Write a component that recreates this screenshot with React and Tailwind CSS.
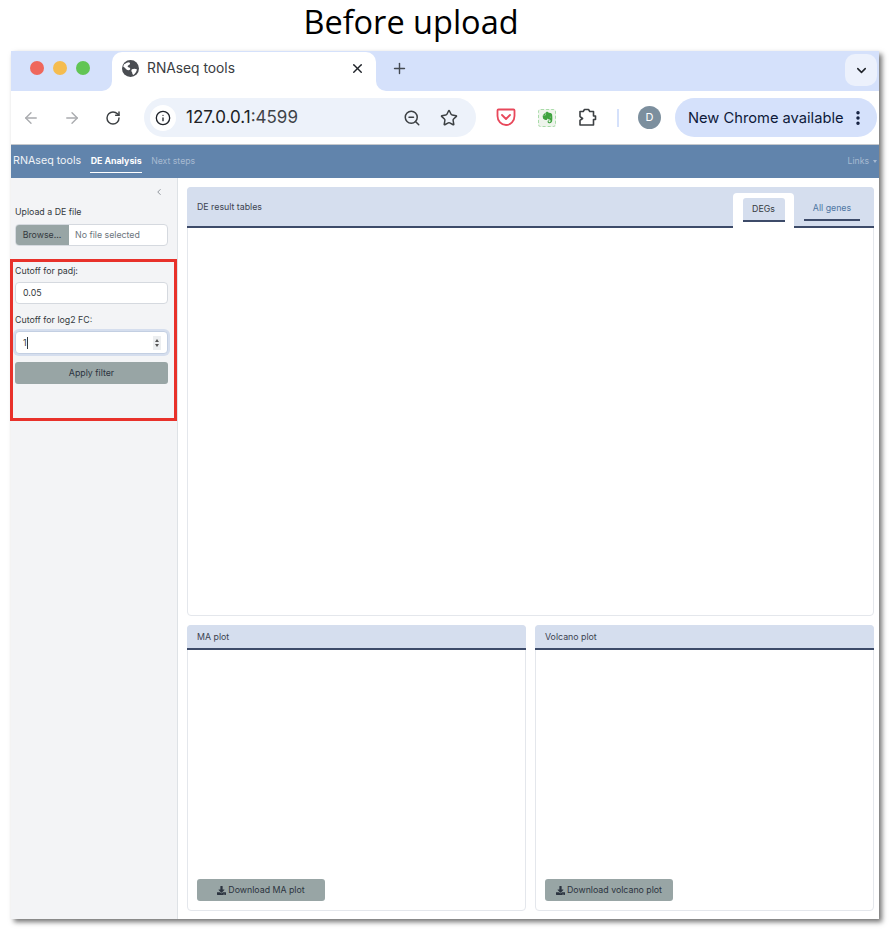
import React from "react";
import { ArrowLeft, ArrowRight, RotateCw, Info, ZoomOut, Star, X, Plus, ChevronDown, ChevronLeft, EllipsisVertical } from "lucide-react";
import { FaDownload, FaEvernote } from "react-icons/fa";

function Globe() {
  return (
    <svg width="17" height="17" viewBox="0 0 24 24">
      <circle cx="12" cy="12" r="12" fill="#4a4d52" />
      <path d="M3 6c2-1 4-3 7-3 1 1 2 2 1 3-1 2-3 1-3 3 0 1 2 1 3 2s1 3-1 3c-2 1-3 0-5-2-1-1-2-2-3-2 0-1 0-3 1-4zM14 13c2-1 5-1 7 0 0 3-2 6-5 8-2-1-1-3-2-4s-1-3 0-4z" fill="#fff" />
    </svg>
  );
}

function Pocket() {
  return (
    <svg width="20" height="19" viewBox="0 0 20 19" fill="none">
      <path d="M1.5 2.5C1.5 1.9 2 1.5 2.5 1.5h15c.6 0 1 .4 1 1V8c0 5-3.800 9-8.500 9S1.500 13 1.500 8V2.500z" stroke="#e8485b" strokeWidth="1.800" />
      <path d="M6 7l4 4 4-4" stroke="#e8485b" strokeWidth="1.800" strokeLinecap="round" strokeLinejoin="round" />
    </svg>
  );
}

function Puzzle() {
  return (
    <svg width="19" height="19" viewBox="0 0 19 19" fill="none">
      <path d="M2 3.500h3.200l1.300-2h4l1.300 2H15.500V8H17.500v3.500H15.500V17H2v-4.600l2.600-1.900L2 8.600V3.500z" stroke="#3c4043" strokeWidth="1.600" strokeLinejoin="round" />
    </svg>
  );
}

function Panel({ title, button }) {
  return (
    <div className="flex-1 h-[286px] flex flex-col bg-white border border-[#e4e7ec] rounded-[4px]">
      <div className="h-[25px] -mx-px -mt-px bg-[#d5deee] border-b-2 border-[#3d4b69] rounded-t-[4px] pl-[10px] flex items-center text-[8.800px] text-[#3c4350]">
        {title}
      </div>
      <div className="flex-1" />
      <div className="pl-[9px] pb-[9px]">
        <div className="w-[128px] h-[22px] bg-[#98a5a5] rounded-[3px] flex items-center justify-center gap-[2px] text-[8.800px] text-[#2c3440]">
          <FaDownload className="w-[9px] h-[9px]" />
          {button}
        </div>
      </div>
    </div>
  );
}

export default function App() {
  return (
    <div className="w-[892px] h-[934px] bg-white overflow-hidden text-[#343a40]" style={{ fontFamily: "Inter, 'Liberation Sans', sans-serif" }}>
      <div className="h-[51px] w-[822px] flex items-start justify-center text-[32.500px] leading-[44px] text-black" style={{ fontFamily: "'Open Sans', sans-serif" }}>
        Before upload
      </div>

      <div className="ml-[11px] w-[868px] h-[868px] flex flex-col bg-white shadow-[3px_3px_5px_rgba(0,0,0,0.55)]">
        {/* tab strip */}
        <div className="h-[40px] shrink-0 bg-[#d5e1fb] flex items-end">
          <div className="w-[101px] h-full pl-[19px] flex items-center gap-[9px] pb-[6px]">
            <span className="w-[14px] h-[14px] rounded-full bg-[#ef675c]" />
            <span className="w-[14px] h-[14px] rounded-full bg-[#f5bc4f]" />
            <span className="w-[14px] h-[14px] rounded-full bg-[#62c554]" />
          </div>
          <div className="relative w-[264px] h-[39px] bg-white rounded-t-[10px] flex items-center pl-[10px] pr-[11px] pb-[7px]">
            <span className="absolute -left-[10px] bottom-0 w-[10px] h-[10px] bg-white"><span className="block w-full h-full bg-[#d5e1fb] rounded-br-[10px]" /></span>
            <span className="absolute -right-[10px] bottom-0 w-[10px] h-[10px] bg-white"><span className="block w-full h-full bg-[#d5e1fb] rounded-bl-[10px]" /></span>
            <Globe />
            <span className="ml-[8px] text-[13.800px] text-[#3a3d42]">RNAseq tools</span>
            <X className="ml-auto w-[15px] h-[15px] text-[#1f2329]" strokeWidth={2.2} />
          </div>
          <div className="flex-1 h-full flex items-center pb-[6px] pl-[14px]">
            <Plus className="w-[17px] h-[17px] ml-px text-[#444a52]" strokeWidth={2} />
            <div className="ml-auto mr-[2px] mb-[-4px] w-[32px] h-[32px] rounded-[10px] bg-[#ecf1fc] flex items-center justify-center">
              <ChevronDown className="w-[15px] h-[15px] text-[#1f2329]" strokeWidth={2.4} />
            </div>
          </div>
        </div>

        {/* toolbar */}
        <div className="h-[54px] shrink-0 bg-white border-b border-[#c5c8cc] flex items-center">
          <div className="w-[133px] flex items-center pl-[11px]">
            <ArrowLeft className="w-[18px] h-[18px] text-[#a9abae]" strokeWidth={1.8} />
            <ArrowRight className="ml-[23px] w-[18px] h-[18px] text-[#a9abae]" strokeWidth={1.8} />
            <RotateCw className="ml-[24px] w-[16px] h-[16px] text-[#3c4043]" strokeWidth={2.2} />
          </div>
          <div className="w-[332px] h-[39px] rounded-full bg-[#edf2fa] flex items-center pl-[6px] pr-[18px]">
            <span className="w-[26px] h-[26px] rounded-full bg-white flex items-center justify-center">
              <Info className="w-[16px] h-[16px] text-[#1f2329]" strokeWidth={2} />
            </span>
            <span className="ml-[10px] text-[17px] text-[#202124]">127.0.0.1<span className="text-[#3f4348]">:4599</span></span>
            <ZoomOut className="ml-auto w-[18px] h-[18px] text-[#3c4043] -translate-x-px" strokeWidth={2} />
            <Star className="ml-[18px] w-[18px] h-[18px] text-[#3c4043]" strokeWidth={2} />
          </div>
          <div className="ml-[20px]"><Pocket /></div>
          <div className="ml-[22px] w-[18px] h-[18px] rounded-[3px] bg-[#eef4ec] border border-dashed border-[#a9dca9] flex items-center justify-center">
            <FaEvernote className="w-[13px] h-[13px] text-[#3fa33f]" />
          </div>
          <div className="ml-[22px]"><Puzzle /></div>
          <div className="ml-[20px] w-[2px] h-[18px] bg-[#d5e1fb]" />
          <div className="ml-[19px] w-[23px] h-[23px] rounded-full bg-[#7c8f9e] flex items-center justify-center text-[11px] text-white">D</div>
          <div className="ml-[14px] w-[202px] h-[39px] rounded-full bg-[#d5e1fb] flex items-center pl-[13px] pt-px text-[14.700px] whitespace-nowrap text-[#0e1a3a]">
            New Chrome available
            <EllipsisVertical className="ml-[5px] w-[18px] h-[18px] text-[#0e1a3a]" strokeWidth={2.6} />
          </div>
        </div>

        {/* navbar */}
        <div className="h-[33px] shrink-0 bg-[#6184ac] flex items-stretch pl-[2px] pr-[2px]">
          <div className="flex items-center text-[10.700px] text-[#f0f3f7]">RNAseq tools</div>
          <div className="ml-[9px] w-[52px] flex items-center justify-center text-[8.800px] font-bold text-white border-b border-white mb-[5px] mt-[5px] whitespace-nowrap">DE Analysis</div>
          <div className="ml-[9px] flex items-center text-[8.700px] text-[#a7bad1]">Next steps</div>
          <div className="ml-auto flex items-center text-[8.700px] text-[#a7bad1]">
            Links
            <span className="ml-[4px] w-0 h-0 border-x-[2.500px] border-x-transparent border-t-[3px] border-t-[#a7bad1]" />
          </div>
        </div>

        {/* body */}
        <div className="flex-1 flex min-h-0">
          <aside className="w-[167px] shrink-0 bg-[#f3f4f6] border-r border-[#dee2e6] flex flex-col text-[8.800px] text-[#343a40]">
            <div className="h-[28px] flex items-center justify-end pr-[13px]">
              <ChevronLeft className="w-[10px] h-[10px] text-[#5f6670]" strokeWidth={1.6} />
            </div>
            <div className="pl-[4px] h-[53px]">
              <div className="h-[12px] flex items-center">Upload a DE file</div>
              <div className="mt-[6px] w-[153px] h-[22px] flex bg-white border border-[#d5d9df] rounded-[4px] overflow-hidden">
                <div className="w-[54px] -my-px -ml-px bg-[#98a5a5] flex items-center justify-center text-[#343a40]">Browse...</div>
                <div className="flex-1 pl-[6px] flex items-center text-[#6c757d]">No file selected</div>
              </div>
            </div>
            <div className="-ml-px w-[167px] h-[162px] border-[3px] border-[#e8312a] pl-[2px]">
              <div className="w-[153px]">
                <div className="h-[15px] flex items-end">Cutoff for padj:</div>
                <div className="mt-[5px] h-[22px] bg-white border border-[#d5d9df] rounded-[4px] flex items-center pl-[7px] text-[#343a40]">0.05</div>
                <div className="mt-[10px] h-[12px] flex items-center">Cutoff for log2 FC:</div>
                <div className="mt-[5px] h-[23px] bg-white border border-[#c3cfe2] rounded-[4px] ring-2 ring-[#d5deee] flex items-center pl-[7px] pr-[6px] text-[#343a40]">
                  1<span className="w-px h-[12px] bg-[#343a40]" />
                  <span className="ml-auto w-[8px] h-[14px] bg-[#eceef0] flex flex-col items-center justify-center gap-[2px]">
                    <span className="w-0 h-0 border-x-[2px] border-x-transparent border-b-[3px] border-b-[#555]" />
                    <span className="w-0 h-0 border-x-[2px] border-x-transparent border-t-[3px] border-t-[#555]" />
                  </span>
                </div>
                <div className="mt-[8px] h-[22px] bg-[#98a5a5] rounded-[3px] flex items-center justify-center text-[#2c3440]">Apply filter</div>
              </div>
            </div>
          </aside>

          <main className="flex-1 bg-white pt-[9px] pl-[9px] pr-[5px] flex flex-col gap-[9px]">
            <div className="h-[429px] flex flex-col bg-white border border-[#e4e7ec] rounded-[4px]">
              <div className="h-[41px] -mx-px -mt-px bg-[#d5deee] border-b-2 border-[#3d4b69] rounded-t-[4px] pl-[10px] pr-[14px] flex text-[8.800px]">
                <div className="flex items-center pt-px text-[#3c4350]">DE result tables</div>
                <div className="ml-auto mt-[6px] -mb-[2px] w-[61px] bg-white rounded-t-[4px] pt-[5px] flex justify-center">
                  <div className="w-[42px] h-[24px] bg-[#d5deee] rounded-t-[3px] border-b-2 border-[#3d4b69] flex items-center justify-center text-[#343a40]">DEGs</div>
                </div>
                <div className="ml-[10px] mt-[10px] w-[56px] h-[24px] border-b-2 border-[#3d4b69] flex items-center justify-center text-[#4f76a3]">All genes</div>
              </div>
            </div>
            <div className="flex gap-[9px]">
              <Panel title="MA plot" button="Download MA plot" />
              <Panel title="Volcano plot" button="Download volcano plot" />
            </div>
          </main>
        </div>
      </div>
    </div>
  );
}
